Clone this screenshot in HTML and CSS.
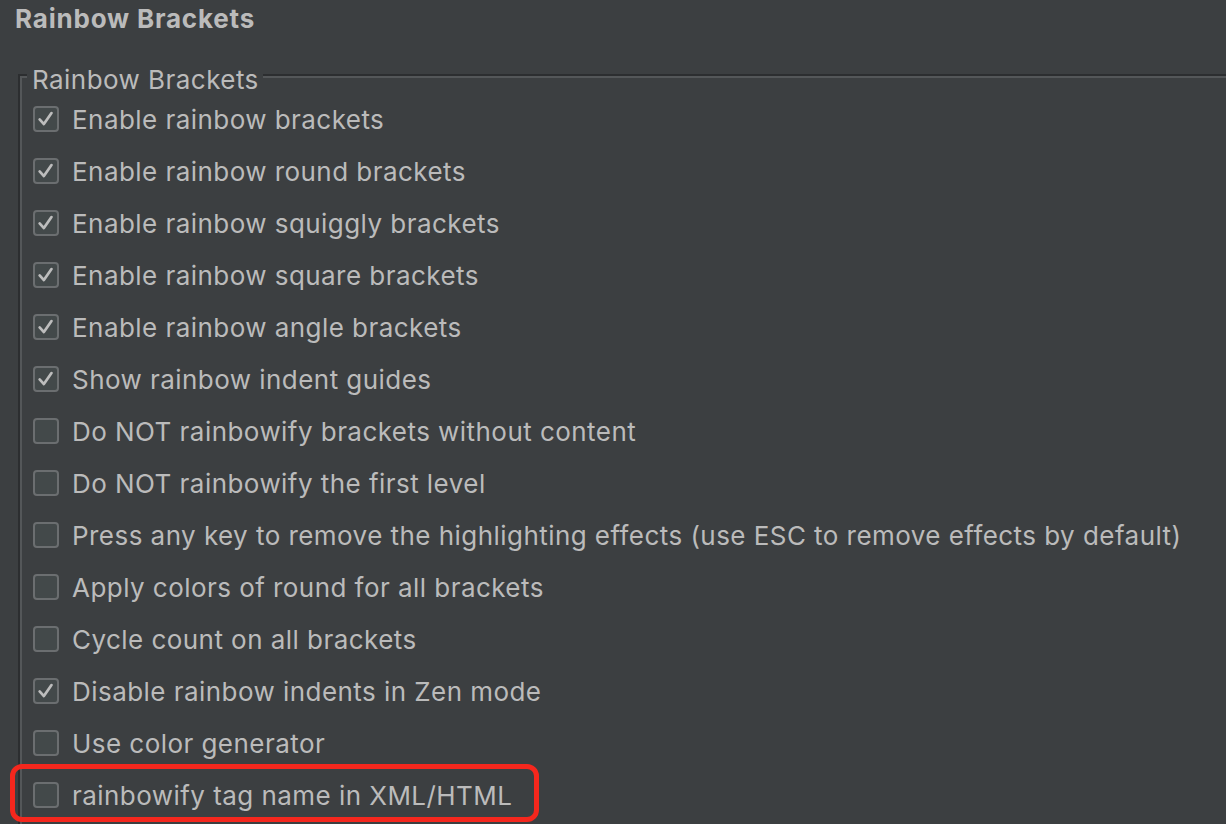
FILE: index.html
```html
<!DOCTYPE html>
<html lang="en">
<head>
    <meta charset="UTF-8">
    <title>Rainbow Brackets</title>
    <link rel="stylesheet" href="styles.css">
</head>
<body>
    <h1 class="title">Rainbow Brackets</h1>

    <fieldset class="group">
        <legend class="group-title">Rainbow Brackets</legend>

        <label class="row"><span class="box checked"><svg viewBox="0 0 26 26"><path d="M5.5 13.5 L10.5 19 L19.5 6"/></svg></span>Enable rainbow brackets</label>
        <label class="row"><span class="box checked"><svg viewBox="0 0 26 26"><path d="M5.5 13.5 L10.5 19 L19.5 6"/></svg></span>Enable rainbow round brackets</label>
        <label class="row"><span class="box checked"><svg viewBox="0 0 26 26"><path d="M5.5 13.5 L10.5 19 L19.5 6"/></svg></span>Enable rainbow squiggly brackets</label>
        <label class="row"><span class="box checked"><svg viewBox="0 0 26 26"><path d="M5.5 13.5 L10.5 19 L19.5 6"/></svg></span>Enable rainbow square brackets</label>
        <label class="row"><span class="box checked"><svg viewBox="0 0 26 26"><path d="M5.5 13.5 L10.5 19 L19.5 6"/></svg></span>Enable rainbow angle brackets</label>
        <label class="row"><span class="box checked"><svg viewBox="0 0 26 26"><path d="M5.5 13.5 L10.5 19 L19.5 6"/></svg></span>Show rainbow indent guides</label>
        <label class="row"><span class="box"></span>Do NOT rainbowify brackets without content</label>
        <label class="row"><span class="box"></span>Do NOT rainbowify the first level</label>
        <label class="row"><span class="box"></span>Press any key to remove the highlighting effects (use ESC to remove effects by default)</label>
        <label class="row"><span class="box"></span>Apply colors of round for all brackets</label>
        <label class="row"><span class="box"></span>Cycle count on all brackets</label>
        <label class="row"><span class="box checked"><svg viewBox="0 0 26 26"><path d="M5.5 13.5 L10.5 19 L19.5 6"/></svg></span>Disable rainbow indents in Zen mode</label>
        <label class="row"><span class="box"></span>Use color generator</label>
        <label class="row highlight"><span class="box"></span>rainbowify tag name in XML/HTML</label>
    </fieldset>
</body>
</html>
```

FILE: styles.css
```css
html, body {
    height: 100%;
    overflow: hidden;
}

body {
    margin: 0;
    background-color: #3c3f41;
    color: #bbbbbb;
    font-family: 'Inter', 'Noto Sans', sans-serif;
    font-size: 26px;
    letter-spacing: 0.45px;
}

.title {
    margin: 0;
    padding-left: 15px;
    font-size: 26px;
    font-weight: bold;
    line-height: 38px;
    letter-spacing: 0.8px;
}

.group {
    margin: 19px 0 0 18px;
    padding: 0 0 10px 13px;
    border: 2px solid #2c2e30;
    border-right: none;
    box-shadow: inset 2px 2px 0 #545759;
}

.group-title {
    margin-left: -6px;
    padding: 10px 4px 0 5px;
    line-height: 26px;
    background-color: #3c3f41;
}

.row {
    position: relative;
    display: flex;
    align-items: center;
    gap: 13px;
    height: 52px;
}

.box {
    box-sizing: border-box;
    flex: none;
    width: 26px;
    height: 26px;
    border: 2px solid #6b6e70;
    border-radius: 4px;
    background-color: #43494a;
}

.box svg {
    display: block;
    width: 22px;
    height: 22px;
}

.box path {
    fill: none;
    stroke: #bdbdbd;
    stroke-width: 3.2;
    stroke-linecap: round;
    stroke-linejoin: round;
}

.highlight::after {
    content: '';
    position: absolute;
    left: -23px;
    top: -5px;
    width: 529px;
    height: 58px;
    box-sizing: border-box;
    border: 5px solid #f5271d;
    border-radius: 12px;
}
```
